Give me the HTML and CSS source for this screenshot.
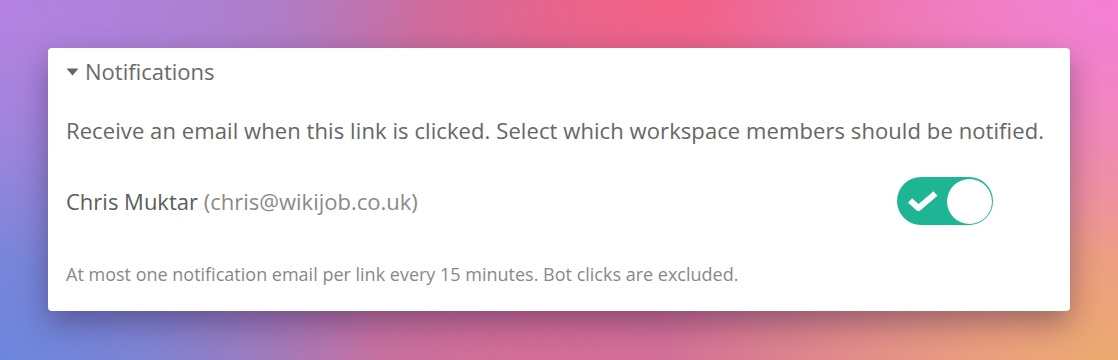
FILE: index.html
```html
<!DOCTYPE html>
<html>
<head>
<meta charset="utf-8">
<link rel="stylesheet" href="styles.css">
</head>
<body>
<div class="stage">
  <section class="card">
    <div class="heading">
      <svg class="caret" width="13" height="8" viewBox="0 0 13 8"><path d="M0.5 0.5 L12.5 0.5 L6.5 7.5 Z" fill="#666"/></svg>
      <span>Notifications</span>
    </div>
    <p class="desc">Receive an email when this link is clicked. Select which workspace members should be notified.</p>
    <div class="member">
      <div class="who"><span class="name">Chris Muktar</span> <span class="email">(chris@wikijob.co.uk)</span></div>
      <div class="toggle">
        <svg class="check" width="32" height="20" viewBox="0 0 32 20"><path d="M3 9.5 L11.5 17 L28.5 2.5" fill="none" stroke="#fff" stroke-width="6"/></svg>
        <div class="knob"></div>
      </div>
    </div>
    <p class="note">At most one notification email per link every 15 minutes. Bot clicks are excluded.</p>
  </section>
</div>
</body>
</html>
```
FILE: styles.css
```css
html, body {
  margin: 0;
  padding: 0;
}
body {
  width: 1118px;
  height: 360px;
  overflow: hidden;
  font-family: "Open Sans", "Noto Sans", sans-serif;
}
.stage {
  width: 1118px;
  height: 360px;
  box-sizing: border-box;
  padding: 48px 48px 0 48px;
  background:
    radial-gradient(ellipse 420px 260px at 0% 0%, rgba(184,130,226,0.95), rgba(184,130,226,0) 100%),
    radial-gradient(ellipse 380px 300px at 0% 100%, rgba(108,134,220,1), rgba(108,134,220,0) 100%),
    radial-gradient(ellipse 420px 260px at 100% 0%, rgba(244,128,214,1), rgba(244,128,214,0) 100%),
    radial-gradient(ellipse 460px 300px at 100% 100%, rgba(236,170,110,1), rgba(236,170,110,0) 100%),
    radial-gradient(ellipse 380px 220px at 60% 0%, rgba(244,96,134,1), rgba(244,96,134,0) 100%),
    radial-gradient(ellipse 420px 200px at 50% 100%, rgba(212,110,150,1), rgba(212,110,150,0) 100%),
    linear-gradient(90deg, #8f86d6 0%, #c86c9c 50%, #ee88a8 100%);
}
.card {
  width: 1022px;
  height: 263px;
  box-sizing: border-box;
  background: #fff;
  border-radius: 4px;
  box-shadow: 0 12px 30px rgba(40, 20, 60, 0.4);
  padding: 8px 18px 0 18px;
  color: #666;
}
.heading {
  display: flex;
  align-items: center;
  gap: 6px;
  font-size: 22px;
  line-height: 30px;
  color: #6a6a6a;
}
.caret {
  margin-top: 1px;
}
.desc {
  margin: 29px 0 0 0;
  font-size: 22px;
  line-height: 30px;
  letter-spacing: 0.085px;
  color: #666;
}
.member {
  margin-top: 32px;
  display: flex;
  align-items: center;
  justify-content: space-between;
  padding-right: 59px;
}
.who {
  font-size: 22px;
  line-height: 30px;
}
.name {
  color: #5c5c5c;
}
.email {
  color: #8a8a8a;
}
.toggle {
  width: 96px;
  height: 48px;
  box-sizing: border-box;
  border-radius: 24px;
  background: #1db594;
  display: flex;
  align-items: center;
  justify-content: space-between;
  padding: 0 1.5px 0 10px;
}
.check {
  display: block;
}
.knob {
  width: 45px;
  height: 45px;
  border-radius: 50%;
  background: #fff;
}
.note {
  margin: 37px 0 0 0;
  font-size: 18px;
  line-height: 24px;
  color: #888;
}
```
